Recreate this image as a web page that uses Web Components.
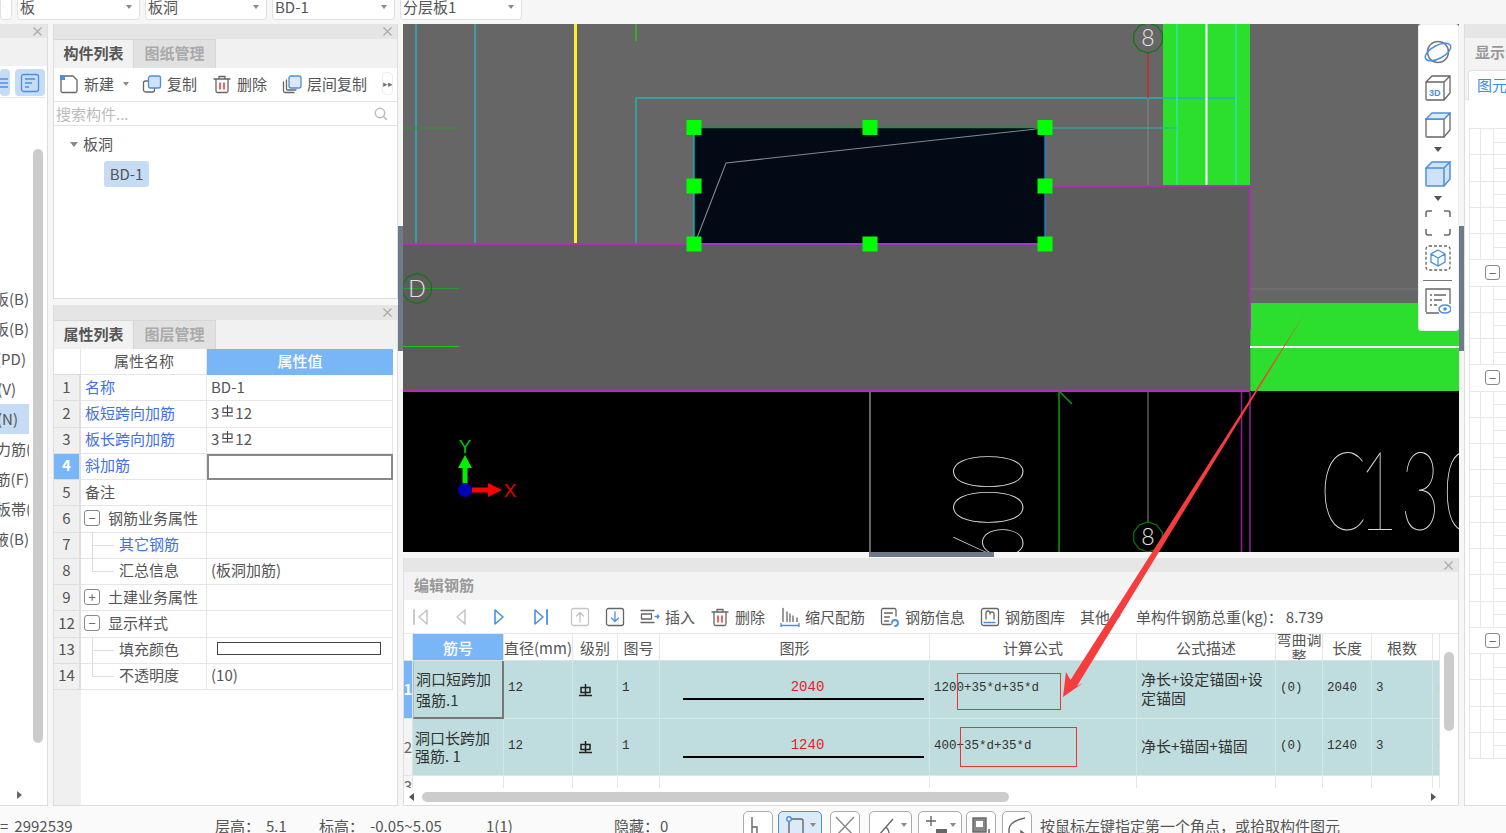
<!DOCTYPE html>
<html lang="zh">
<head>
<meta charset="utf-8">
<title>编辑钢筋</title>
<style>
    html, body { margin: 0; height: 100%; }
    body {
        width: 1506px;
        height: 833px;
        overflow: hidden;
        position: relative;
        background: #f6f6f6;
        color: #555;
        font: 15px/20px "Noto Sans CJK SC", "Noto Sans", sans-serif;
    }
    .main { display: flex; height: 782px; }
    .col2 { width: 345px; display: flex; flex-direction: column; gap: 6px; margin-left: 5px; }
    .center { width: 1056px; display: flex; flex-direction: column; }
</style>
</head>
<body>
<gx-topbar></gx-topbar>
<div class="main">
    <gx-leftnav></gx-leftnav>
    <div class="col2">
        <gx-panel tabs="构件列表,图纸管理" style="height:275px"><gx-component-list></gx-component-list></gx-panel>
        <gx-panel tabs="属性列表,图层管理" style="height:501px"><gx-prop-table></gx-prop-table></gx-panel>
    </div>
    <gx-splitter></gx-splitter>
    <div class="center">
        <gx-canvas></gx-canvas>
        <gx-rebar-panel></gx-rebar-panel>
    </div>
    <gx-splitter></gx-splitter>
    <gx-rightpanel></gx-rightpanel>
</div>
<gx-statusbar></gx-statusbar>
<gx-callout></gx-callout>

<script>
const BLUE = '#4a90e2';
const PALE = '#cfe2f9';
const GRAY = '#666';
const svg = (w, h, body) => `<svg xmlns="http://www.w3.org/2000/svg" width="${w}" height="${h}" viewBox="0 0 ${w} ${h}" fill="none" stroke-width="1.3" stroke-linejoin="round" stroke-linecap="round">${body}</svg>`;

const ICONS = {
    new: svg(20, 20, `<path d="M2 3v14a1.500 1.500 0 0 0 1.500 1.500H16.500a1.500 1.500 0 0 0 1.500-1.500V6l-4-4H6" stroke="${GRAY}"/><rect x="1" y="1" width="5" height="5" fill="${BLUE}" stroke="none"/>`),
    copy: svg(20, 20, `<rect x="1.500" y="7" width="11" height="11" rx="2" stroke="${GRAY}"/><rect x="6.500" y="2" width="12" height="12" rx="2" fill="${PALE}" stroke="${BLUE}"/>`),
    del: svg(20, 20, `<path d="M2 5h16M7 4.500V2.500h6v2M4 5v12a1.500 1.500 0 0 0 1.500 1.500h9A1.500 1.500 0 0 0 16 17V5" stroke="${GRAY}"/><path d="M8 9v6M12 9v6" stroke="#e33" stroke-width="1.500"/>`),
    floor: svg(20, 20, `<path d="M1.500 8v9a1.500 1.500 0 0 0 1.500 1.500h9" stroke="${GRAY}"/><path d="M4.500 6v9a1 1 0 0 0 1 1H14" stroke="${GRAY}"/><rect x="7" y="2" width="12" height="12" rx="2" fill="#dce9f9" stroke="${BLUE}"/>`),
    first: svg(20, 20, `<path d="M3 3v14" stroke="#c4c4c4" stroke-width="1.800"/><path d="M16 3 8 10l8 7z" stroke="#c4c4c4" stroke-width="1.500"/>`),
    prev: svg(20, 20, `<path d="M14 3 6 10l8 7z" stroke="#c4c4c4" stroke-width="1.500"/>`),
    next: svg(20, 20, `<path d="M6 3l8 7-8 7z" stroke="${BLUE}" stroke-width="1.600"/>`),
    last: svg(20, 20, `<path d="M17 3v14" stroke="${BLUE}" stroke-width="1.800"/><path d="M5 3l8 7-8 7z" stroke="${BLUE}" stroke-width="1.600"/>`),
    up: svg(20, 20, `<rect x="1.500" y="1.500" width="17" height="17" rx="2" stroke="#c4c4c4"/><path d="M10 15V6M6.500 9 10 5.500 13.500 9" stroke="#c4c4c4"/>`),
    down: svg(20, 20, `<rect x="1.500" y="1.500" width="17" height="17" rx="2" stroke="${GRAY}"/><path d="M10 5v9M6.500 11l3.500 3.500 3.500-3.500" stroke="${BLUE}"/>`),
    insert: svg(20, 20, `<path d="M1 3.500h13M1 15.500h13" stroke="${GRAY}"/><rect x="1.500" y="7" width="10" height="5" stroke="${GRAY}"/><path d="M15 9.500h4M17.500 8l1.500 1.500-1.500 1.500" stroke="${BLUE}"/>`),
    ruler: svg(20, 20, `<path d="M3 1.500v13M7 5v9.500M10 7v7.500M13 9v5.500M17 11v3.500" stroke="${GRAY}"/><path d="M1 18.500h18M1 16.500v4M19 16.500v4" stroke="${BLUE}"/>`),
    info: svg(20, 20, `<path d="M16 9V3a1.500 1.500 0 0 0-1.500-1.500H3A1.500 1.500 0 0 0 1.500 3v13A1.500 1.500 0 0 0 3 17.500h8" stroke="${GRAY}"/><path d="M4.500 6h8M4.500 10h5M4.500 14h4" stroke="${GRAY}"/><path d="M12 16a3 3 0 1 1 3 3" stroke="${BLUE}" stroke-width="1.800"/>`),
    lib: svg(20, 20, `<rect x="1.500" y="1.500" width="17" height="17" rx="2" stroke="${GRAY}"/><path d="M6 12V6a2 2 0 0 1 4 0M10 7a2 2 0 0 1 4 0v5" stroke="${GRAY}"/><path d="M4 15.500h12" stroke="${BLUE}" stroke-dasharray="3 1"/>`),
    search: svg(14, 14, `<circle cx="6" cy="6" r="4.700" stroke="#bbb" stroke-width="1.500"/><path d="M9.500 9.500 12.500 12.500" stroke="#bbb" stroke-width="1.600"/>`),
    caret: `<svg width="6" height="4" viewBox="0 0 6 4"><path d="M0 0h6L3 4z" fill="#8a8a8a"/></svg>`,
    close: `<svg width="9" height="9" viewBox="0 0 9 9" stroke="#aaa" stroke-width="1.200"><path d="M.5.500l8 8M8.500.500l-8 8"/></svg>`,
    bar: `<svg width="13" height="12" viewBox="0 0 13 12" fill="none" stroke="#444" stroke-width="1.100"><path d="M6.500 0v11M1 11h11"/><rect x="2" y="3" width="9" height="4.500"/></svg>`
};

// 钢筋级别符号
const RB = `<svg width="13" height="13" viewBox="0 0 13 13" fill="none" stroke="#222" stroke-width="1.500"><path d="M6.500 0v12M0 11.500h13"/><rect x="2" y="3.500" width="9" height="5"/></svg>`;

class GxIcon extends HTMLElement {
    constructor() {
        super();
        this.shadow = this.attachShadow({mode: 'open'});
    }

    connectedCallback() {
        this.shadow.innerHTML = `<style>:host { display: inline-flex; flex: none; } svg { display: block; }</style>${ICONS[this.getAttribute('name')]}`;
    }
}

class GxTool extends HTMLElement {
    constructor() {
        super();
        this.shadow = this.attachShadow({mode: 'open'});
    }

    connectedCallback() {
        this.shadow.innerHTML = `<style>
            :host { display: inline-flex; align-items: center; gap: 5px; flex: none; white-space: nowrap; color: #555; }
        </style><gx-icon name="${this.getAttribute('icon')}"></gx-icon><slot></slot>`;
    }
}

class GxTopbar extends HTMLElement {
    constructor() {
        super();
        this.shadow = this.attachShadow({mode: 'open'});
    }

    connectedCallback() {
        const combo = (text, w) => `<div class="combo" style="width:${w}px"><span>${text}</span>${ICONS.caret}</div>`;
        this.shadow.innerHTML = `<style>
            :host { display: flex; height: 24px; box-sizing: border-box; padding-left: 0; gap: 5px; overflow: hidden; }
            .combo {
                height: 20px; box-sizing: border-box; background: #fff; border: 1px solid #e2e2e2; border-top: 0;
                border-radius: 0 0 4px 4px; display: flex; align-items: center; justify-content: space-between;
                padding: 0 7px 6px 3px; line-height: 14px; flex: none;
            }
            .combo span { margin-left: -1px; }
        </style>
        ${combo('', 10)}${combo('板', 123)}${combo('板洞', 122)}${combo('BD-1', 123)}${combo('分层板1', 122)}`;
    }
}

class GxLeftnav extends HTMLElement {
    constructor() {
        super();
        this.shadow = this.attachShadow({mode: 'open'});
    }

    connectedCallback() {
        // 第二个数是文字末端到列宽的距离，这一栏被窗口裁掉了一半
        const items = [['板(B)', 0], ['板(B)', 0], ['(PD)', 3], ['(V)', 13], ['(N)', 11], ['力筋(', -2], ['筋(F)', 0], ['板帯(', -2], ['腋(B)', 0]];
        this.shadow.innerHTML = `<style>
            :host { display: flex; flex-direction: column; width: 48px; height: 782px; box-sizing: border-box; background: #fff; border-right: 1px solid #ddd; border-bottom: 1px solid #ddd; overflow: hidden; }
            .strip { height: 14px; background: #e6e6e6; display: flex; justify-content: flex-end; align-items: center; padding-right: 5px; flex: none; }
            .tabs { height: 28px; background: #f1f1f1; flex: none; }
            .tools { height: 32px; display: flex; gap: 5px; padding-top: 3px; border-bottom: 1px solid #e6e6e6; margin-right: 1px; flex: none; box-sizing: border-box; }
            .tools div { height: 27px; background: #c5dcf4; border-radius: 4px; display: flex; align-items: center; justify-content: center; }
            .body { flex: 1; display: flex; position: relative; }
            ul { list-style: none; margin: 0; padding: 0; width: 29px; margin-top: 186px; }
            li { height: 30px; display: flex; align-items: center; justify-content: flex-end; white-space: nowrap; overflow: hidden; }
            li.on { background: #c5dcf4; }
            li span { flex: none; }
            .thumb { position: absolute; left: 33px; top: 51px; width: 10px; height: 594px; background: #ccc; border-radius: 5px; }
            .arrow { position: absolute; left: 17px; top: 693px; width: 0; height: 0; border: 4px solid transparent; border-left: 5px solid #666; border-right: 0; }
        </style>
        <div class="strip">${ICONS.close}</div>
        <div class="tabs"></div>
        <div class="tools">
            <div style="width:10px"><svg width="10" height="14" stroke="${BLUE}" stroke-width="1.300"><path d="M0 3h8M0 7h8M0 11h8"/></svg></div>
            <div style="width:30px;margin-left:0"><svg width="20" height="20" viewBox="0 0 20 20" fill="none" stroke="${BLUE}" stroke-width="1.300"><rect x="1.500" y="1.500" width="17" height="17" rx="2"/><path d="M5 6h10M5 10h7M5 14h4"/></svg></div>
        </div>
        <div class="body">
            <ul>${items.map(([t, r], i) => `<li class="${i === 4 ? 'on' : ''}"><span style="margin-right:${r}px">${t}</span></li>`).join('')}</ul>
            <div class="thumb"></div>
            <div class="arrow"></div>
        </div>`;
    }
}

class GxPanel extends HTMLElement {
    constructor() {
        super();
        this.shadow = this.attachShadow({mode: 'open'});
    }

    connectedCallback() {
        const tabs = this.getAttribute('tabs').split(',');
        this.shadow.innerHTML = `<style>
            :host { display: flex; flex-direction: column; box-sizing: border-box; border: 1px solid #ddd; border-top: 0; background: #fff; flex: none; }
            .strip { height: 15px; background: #e5e5e5; display: flex; justify-content: flex-end; align-items: center; padding-right: 5px; flex: none; }
            .tabs { height: 29px; display: flex; background: #f1f1f1; flex: none; }
            .tab { width: 80px; text-align: center; line-height: 25px; font-weight: 700; box-sizing: border-box; border: 1px solid #d6d6d6; border-bottom: 0; border-left-width: 0; }
            .tab.on { background: #f1f1f1; color: #555; }
            .tab.off { background: #e1e1e1; color: #aaa; width: 82px; }
            .content { flex: 1; min-height: 0; display: flex; flex-direction: column; }
        </style>
        <div class="strip">${ICONS.close}</div>
        <div class="tabs">${tabs.map((t, i) => `<div class="tab ${i ? 'off' : 'on'}">${t}</div>`).join('')}</div>
        <div class="content"><slot></slot></div>`;
    }
}

class GxComponentList extends HTMLElement {
    constructor() {
        super();
        this.shadow = this.attachShadow({mode: 'open'});
    }

    connectedCallback() {
        this.shadow.innerHTML = `<style>
            :host { display: flex; flex-direction: column; height: 100%; }
            .tools { height: 34px; flex: none; box-sizing: border-box; border-bottom: 1px solid #e4e4e4; display: flex; align-items: center; padding-bottom: 2px; }
            .more { margin-left: 15px; width: 11px; height: 23px; border: 1px solid #eee; border-radius: 4px; font-size: 9px; line-height: 21px; text-align: center; color: #777; box-sizing: border-box; white-space: nowrap; overflow: hidden; }
            .search { height: 24px; flex: none; box-sizing: border-box; border-bottom: 1px solid #e4e4e4; display: flex; align-items: center; justify-content: space-between; padding: 0 9px 0 2px; color: #bbb; }
            .tree { padding: 8px 0 0 16px; }
            .node { display: flex; align-items: center; gap: 5px; height: 20px; }
            .tri { width: 0; height: 0; border: 4px solid transparent; border-top: 5px solid #888; border-bottom: 0; }
            .chip { margin: 7px 0 0 34px; width: 45px; height: 26px; line-height: 25px; text-align: center; background: #c5dcf4; border-radius: 3px; }
        </style>
        <div class="tools">
            <gx-tool icon="new" style="margin-left:5px">新建</gx-tool>
            <span style="margin-left:9px;display:flex">${ICONS.caret}</span>
            <gx-tool icon="copy" style="margin-left:13px">复制</gx-tool>
            <gx-tool icon="del" style="margin-left:15px">删除</gx-tool>
            <gx-tool icon="floor" style="margin-left:15px">层间复制</gx-tool>
            <div class="more">▸▸</div>
        </div>
        <div class="search"><span>搜索构件...</span><gx-icon name="search"></gx-icon></div>
        <div class="tree">
            <div class="node"><span class="tri"></span><span>板洞</span></div>
            <div class="chip">BD-1</div>
        </div>`;
    }
}

class GxPropTable extends HTMLElement {
    constructor() {
        super();
        this.shadow = this.attachShadow({mode: 'open'});
    }

    connectedCallback() {
        const rebar = `<span class="rb">3${ICONS.bar}12</span>`;
        const rows = [
            ['1', '名称', 'BD-1', 'link'],
            ['2', '板短跨向加筋', rebar, 'link'],
            ['3', '板长跨向加筋', rebar, 'link'],
            ['4', '斜加筋', '', 'link active'],
            ['5', '备注', '', ''],
            ['6', '钢筋业务属性', '', 'minus'],
            ['7', '其它钢筋', '', 'child link'],
            ['8', '汇总信息', '(板洞加筋)', 'child end'],
            ['9', '土建业务属性', '', 'plus'],
            ['12', '显示样式', '', 'minus'],
            ['13', '填充颜色', '<i class="swatch"></i>', 'child'],
            ['14', '不透明度', '(10)', 'child end']
        ];
        const rowHtml = rows.map(([n, name, val, kind]) => {
            const toggle = kind.includes('minus') ? '<b class="tg">−</b>' : kind.includes('plus') ? '<b class="tg">+</b>' : '';
            return `<div class="row ${kind}"><div class="idx">${n}</div><div class="name">${toggle}<span>${name}</span></div><div class="val">${val}</div></div>`;
        }).join('');
        this.shadow.innerHTML = `<style>
            :host { display: block; flex: 1; height: 100%; background: linear-gradient(#f0f0f0, #f0f0f0) 0 0 / 27px 100% no-repeat; }
            .row { display: grid; grid-template-columns: 27px 126px 186px; height: 26.25px; }
            .row > div { box-sizing: border-box; border-bottom: 1px solid #e6e6e6; border-right: 1px solid #e6e6e6; display: flex; align-items: center; white-space: nowrap; overflow: hidden; background-color: #fff; padding-bottom: 2px; }
            .row > .idx { background: #f0f0f0; justify-content: center; border-right: 2px solid #dedede; border-bottom-color: #dedede; }
            .head { height: 26px; }
            .head > .idx { background: #fff; border-right: 1px solid #e6e6e6; }
            .head > .name { justify-content: center; padding-left: 1px; }
            .head > .val { background: #78b6f7; color: #fff; justify-content: center; font-weight: 500; border: 0; padding-left: 0; }
            .name { padding-left: 4px; }
            .val { padding-left: 4px; }
            .link .name { color: #3f70e6; }
            .active > .idx { background: #78b6f7; color: #fff; font-weight: 700; }
            .active > .val { border: 2px solid #888; }
            .tg { width: 14px; height: 14px; border: 1px solid #888; border-radius: 3px; font-weight: 400; font-size: 13px; line-height: 13px; text-align: center; margin-right: 8px; flex: none; color: #666; }
            .minus .name, .plus .name { padding-left: 3px; }
            .child .name { padding-left: 38px; background-image: linear-gradient(#ddd, #ddd), linear-gradient(#ddd, #ddd); background-repeat: no-repeat; background-position: 11px 0, 11px 50%; background-size: 1px 100%, 22px 1px; }
            .child.end .name { background-size: 1px 50%, 22px 1px; }
            .rb { display: inline-flex; align-items: center; }
            .rb svg { margin: 0 1px 4px 2px; }
            .swatch { display: block; margin-left: 6px; width: 164px; height: 13px; box-sizing: border-box; border: 1px solid #444; background: #fff; margin-bottom: 2px; }
        </style>
        <div class="row head"><div class="idx"></div><div class="name">属性名称</div><div class="val">属性值</div></div>
        ${rowHtml}`;
    }
}

class GxSplitter extends HTMLElement {
    constructor() {
        super();
        this.shadow = this.attachShadow({mode: 'open'});
    }

    connectedCallback() {
        this.shadow.innerHTML = `<style>
            :host { display: block; width: 5px; flex: none; padding-top: 202px; box-sizing: border-box; }
            div { height: 125px; background: #6e7a87; }
        </style><div></div>`;
    }
}

class GxCanvas extends HTMLElement {
    constructor() {
        super();
        this.shadow = this.attachShadow({mode: 'open'});
    }

    connectedCallback() {
        const handles = [[694, 127.5], [870, 127.5], [1045, 127.5], [694, 186], [1045, 186], [694, 244], [870, 244], [1045, 244]]
            .map(([x, y]) => `<rect x="${x - 7.5}" y="${y - 7.5}" width="15" height="15" fill="#00ff00"/>`).join('');
        const bubble = (cx, cy, t) => {
            const pts = [];
            for (let i = 0; i < 10; i++) {
                const a = Math.PI * 2 * i / 10 + Math.PI / 10;
                pts.push(`${(cx + 15 * Math.cos(a)).toFixed(1)},${(cy + 15 * Math.sin(a)).toFixed(1)}`);
            }
            return `<polygon points="${pts.join(' ')}" fill="none" stroke="#0b7a0b" stroke-width="1.200"/><text class="thin" x="${cx}" y="${cy + 8}" text-anchor="middle" font-size="23">${t}</text>`;
        };
        this.shadow.innerHTML = `<style>
            :host { display: block; position: relative; height: 528px; flex: none; overflow: hidden; background: #000; }
            svg.cad { display: block; }
            .thin { fill: #e2e2e2; font-family: Lato, "Liberation Sans", sans-serif; font-weight: 300; }
            .cadt { fill: #dcdcdc; font-family: Lato, "Liberation Sans", sans-serif; font-weight: 100; }
            .rail { position: absolute; left: 1015px; top: 0; width: 41px; height: 307px; background: #fff; border-radius: 3px; box-sizing: border-box; display: flex; flex-direction: column; align-items: center; border: 1px solid #eee; padding-right: 2px; }
            .rail svg { display: block; flex: none; }
            .rail .c { width: 0; height: 0; border: 4px solid transparent; border-top: 5px solid #555; border-bottom: 0; flex: none; }
        </style>
        <svg class="cad" width="1056" height="528" viewBox="403 24 1056 528" fill="none">
            <rect x="403" y="24" width="1056" height="367" fill="#666"/>
            <rect x="1163" y="24" width="87" height="162" fill="#2ddf2d"/>
            <path d="M1045 186H1250V391H403V244H1045Z" fill="#5c5c5c"/>
            <path d="M1250.500 303H1459V391H1250.500Z" fill="#2ddf2d"/>

            <path d="M416 24V244M475 24V244" stroke="#1fc4d0" stroke-width="1.200"/>
            <path d="M575.500 24V244" stroke="#ffef2a" stroke-width="3"/>
            <path d="M636 24V41" stroke="#2fbf1f" stroke-width="1.500"/>
            <path d="M636 244V98H1236" stroke="#24b4ba" stroke-width="1.300"/>
            <path d="M403 128H459M403 288.500H459" stroke="#2a9a2a" stroke-width="1.200"/>
            <path d="M403 346.500H459" stroke="#11cc11" stroke-width="1.200"/>

            <path d="M1177 24V186M1236 24V186" stroke="#27e8c0" stroke-width="1.300"/>
            <path d="M1206.500 24V186" stroke="#fff" stroke-width="2"/>
            <path d="M1045 128H1177" stroke="#29b0b0" stroke-width="1.200"/>
            <path d="M1148 52V98" stroke="#d32222" stroke-width="1.300"/>
            <path d="M1148 98V186" stroke="#888"/>
            <path d="M1250 289H1420" stroke="#777"/>

            <rect x="694" y="127.500" width="351" height="116.500" fill="#020a15"/>
            <path d="M694 127.500H1045" stroke="#0f9a3a" stroke-width="1.300"/>
            <path d="M694 127V244" stroke="#13bcc0" stroke-width="1.300"/>
            <path d="M1045 127V244" stroke="#1d82e0" stroke-width="1.300"/>
            <path d="M697 238L726 163L1045 128" stroke="#7f8a90" stroke-width="1.100"/>

            <path d="M403 244H694" stroke="#b02fb5" stroke-width="1.800"/>
            <path d="M694 244H1045" stroke="#9f34d8" stroke-width="1.800"/>
            <path d="M1045 186H1250V330" stroke="#b02fb5" stroke-width="1.800"/>
            <path d="M403 391H1250" stroke="#b02fb5" stroke-width="1.800"/>
            <path d="M1250 347H1459" stroke="#fff" stroke-width="2"/>
            ${handles}
            ${bubble(417, 288.500, 'D')}
            ${bubble(1148, 38, '8')}

            <path d="M870 392V552" stroke="#aaa" stroke-width="1.200"/>
            <path d="M1059 392V552M1059 391L1072 404" stroke="#0a9a0a" stroke-width="1.500"/>
            <path d="M1148 392V523" stroke="#888"/>
            <path d="M1241.500 392V552M1250 392V552" stroke="#8e1a96" stroke-width="1.600"/>
            ${bubble(1148, 537, '8')}

            <text class="cadt" transform="translate(1023,561) rotate(-90) scale(.63,1)" font-size="98">600</text>
            <text class="cadt" transform="translate(1320,530) scale(.62,1)" font-size="110" x="0 62 130 200">C130</text>

            <path d="M465 484V466" stroke="#00f000" stroke-width="5"/>
            <path d="M465 455L472 468H458Z" fill="#00f000"/>
            <path d="M472 490H489" stroke="#f00" stroke-width="5"/>
            <path d="M488 483L502 490L488 497Z" fill="#f00"/>
            <circle cx="465" cy="490" r="7" fill="#0000b4"/>
            <text x="465" y="453" text-anchor="middle" font-size="19" fill="#00c000" font-family="Liberation Sans">Y</text>
            <text x="510" y="497" text-anchor="middle" font-size="19" fill="#e00000" font-family="Liberation Sans">X</text>
        </svg>
        <div class="rail">
            <svg style="margin-top:14px" width="28" height="26" viewBox="0 0 28 26"><circle cx="14" cy="13" r="10.500" fill="none" stroke="#777" stroke-width="1.500"/><ellipse cx="14" cy="13" rx="14" ry="6.500" transform="rotate(-28 14 13)" fill="none" stroke="${BLUE}" stroke-width="1.500"/></svg>
            <svg style="margin-top:10px" width="26" height="26" viewBox="0 0 26 26" fill="none" stroke="#666" stroke-width="1.300"><path d="M1 7h18v18H2a1 1 0 0 1-1-1zM1 7l6-6h18v17l-6 7M19 7l6-6"/><text x="4" y="21" font-size="9" font-weight="700" fill="${BLUE}" stroke="none" font-family="Liberation Sans">3D</text></svg>
            <svg style="margin-top:11px" width="26" height="26" viewBox="0 0 26 26" fill="none" stroke="#666" stroke-width="1.300"><path d="M1 7h18v18H2a1 1 0 0 1-1-1z"/><path d="M19 25l6-7V1M19 7l6-6" /><path d="M1 7l6-6h18l-6 6z" fill="#dce9f9" stroke="${BLUE}"/></svg>
            <span class="c" style="margin-top:9px"></span>
            <svg style="margin-top:9px" width="26" height="26" viewBox="0 0 26 26" fill="${PALE}" stroke="${BLUE}" stroke-width="1.500"><path d="M1 7h18v18H2a1 1 0 0 1-1-1zM1 7l6-6h18l-6 6zM19 7l6-6v17l-6 7z"/></svg>
            <span class="c" style="margin-top:9px"></span>
            <svg style="margin-top:9px" width="26" height="26" viewBox="0 0 26 26" fill="none" stroke="#666" stroke-width="1.500"><path d="M1 7V3a2 2 0 0 1 2-2h4M19 1h4a2 2 0 0 1 2 2v4M25 19v4a2 2 0 0 1-2 2h-4M7 25H3a2 2 0 0 1-2-2v-4"/></svg>
            <svg style="margin-top:9px" width="26" height="26" viewBox="0 0 26 26" fill="none" stroke-width="1.300"><rect x="1" y="1" width="24" height="24" rx="3" stroke="#666" stroke-dasharray="3 2"/><path d="M13 5l7 4v8l-7 4-7-4V9zM6 9l7 4 7-4M13 13v8" stroke="${BLUE}"/></svg>
            <div style="width:29px;height:1px;background:#777;margin-top:9px;flex:none"></div>
            <svg style="margin-top:7px" width="26" height="26" viewBox="0 0 26 26" fill="none" stroke="#666" stroke-width="1.300"><path d="M1 24V1h24v15M1 25h13"/><path d="M5 7h2M9 7h12M5 12h2M9 12h8M5 17h2M9 17h3"/><ellipse cx="20" cy="21" rx="6" ry="4" stroke="${BLUE}" stroke-width="1.500" fill="#fff"/><circle cx="20" cy="21" r="1.800" fill="${BLUE}" stroke="none"/></svg>
        </div>`;
    }
}

class GxRebarPanel extends HTMLElement {
    constructor() {
        super();
        this.shadow = this.attachShadow({mode: 'open'});
    }

    connectedCallback() {
        const heads = ['', '筋号', '直径(mm)', '级别', '图号', '图形', '计算公式', '公式描述', '弯曲调整', '长度', '根数', ''];
        const cell = (html, cls = '', st = '') => `<div class="td ${cls}" style="${st}">${html}</div>`;
        const row = (n, name, lh, shape, formula, desc, len, sel) => `<div class="tr data ${sel ? 'sel' : ''}">
            ${cell(n, 'no')}
            ${cell(name, 'nm', `line-height:${lh}px`)}
            ${cell('12', 'm')}
            ${cell(RB, 'cn')}
            ${cell('1', 'm')}
            <div class="td shape"><span>${shape}</span><i></i></div>
            ${cell(formula, 'm f')}
            ${cell(desc, 'desc')}
            ${cell('(0)', 'm')}
            ${cell(len, 'm')}
            ${cell('3', 'm')}
            ${cell('(0)', 'm')}
        </div>`;
        this.shadow.innerHTML = `<style>
            :host { display: flex; flex-direction: column; height: 254px; box-sizing: border-box; margin-top: 0; border-left: 1px solid #ddd; border-right: 1px solid #ddd; border-bottom: 1px solid #ddd; background: #fff; position: relative; flex: none; }
            .gap { height: 6px; background: #f6f6f6; flex: none; margin: 0 -1px; padding-left: 466px; }
            .gap b { display: block; width: 125px; height: 5px; background: #6e7a87; }
            .strip { height: 14px; background: #e6e6e6; display: flex; justify-content: flex-end; align-items: center; padding-right: 5px; flex: none; }
            .heading { height: 28px; background: #f3f3f3; line-height: 25px; padding-left: 10px; color: #999; font-weight: 700; flex: none; }
            .tools { height: 34px; flex: none; box-sizing: border-box; border-bottom: 1px solid #e8e8e8; display: flex; align-items: center; white-space: nowrap; }
            .wrap { display: flex; flex: 1; min-height: 0; }
            .table { width: 1036px; flex: none; height: 154px; overflow: hidden; }
            .tr { display: grid; grid-template-columns: 9px 91px 69px 45px 42px 270px 207px 139px 47px 49px 61px 7px; }
            .th { height: 27px; box-sizing: border-box; display: flex; align-items: center; justify-content: center; text-align: center; border-right: 1px solid #e6e6e6; border-bottom: 1px solid #e0e0e0; white-space: nowrap; overflow: hidden; padding-top: 1px; }
            .th.on { background: #78b6f7; color: #fff; font-weight: 500; }
            .th.wrapn { white-space: normal; line-height: 17px; padding-top: 0; }
            .data { height: 57.500px; background: #bfddde; color: #333; }
            .td { box-sizing: border-box; border-right: 1px solid #d3e5e5; border-bottom: 1px solid #d9e8e8; display: flex; align-items: center; overflow: hidden; padding-left: 4px; white-space: nowrap; }
            .td.no { padding: 0; justify-content: center; color: #666; background: #f4f4f4; }
            .sel .td.no { background: #78b6f7; color: #fff; font-weight: 700; }
            .td.nm { white-space: normal; padding: 0 0 0 2px; word-break: break-all; }
            .sel .td.nm { border: 2px solid #777; border-top: 0; border-left: 1px solid #bbb; }
            .td.m { font: 12.500px/20px "Liberation Mono", monospace; padding-bottom: 2px; }
            .td.cn { padding-left: 6px; padding-top: 2px; }
            .td.desc { white-space: normal; line-height: 19px; padding: 0 8px 2px 4px; }
            .td.shape { display: block; padding: 0; position: relative; text-align: center; }
            .td.shape span { display: block; font: 14px/20px "Liberation Mono", monospace; color: #e6202a; margin-top: 16px; transform: translateX(13px); }
            .td.shape i { display: block; margin: 1px 0 0 23px; width: 241px; height: 2px; background: #000; }
            .blank { height: 14px; }
            .blank .td { border-bottom: 0; background: #fff; border-right-color: #e6e6e6; }
            .blank .no { align-items: flex-start; background: #f4f4f4; }
            .v { flex: 1; position: relative; }
            .v b { display: block; margin: 18px 0 0 4px; width: 10px; height: 79px; background: #ccc; border-radius: 5px; }
            .h { height: 17px; flex: none; display: flex; align-items: center; margin-top: -1px; }
            .tl, .tr2 { width: 0; height: 0; border: 4px solid transparent; flex: none; }
            .tl { border-right: 5px solid #555; border-left: 0; margin-left: 5px; }
            .tr2 { border-left: 5px solid #555; border-right: 0; margin-left: 422px; }
            .h b { display: block; margin-left: 8px; width: 587px; height: 10px; background: #ccc; border-radius: 5px; }
        </style>
        <div class="gap"><b></b></div>
        <div class="strip">${ICONS.close}</div>
        <div class="heading">编辑钢筋</div>
        <div class="tools">
            <gx-icon name="first" style="margin-left:7px"></gx-icon>
            <gx-icon name="prev" style="margin-left:20px"></gx-icon>
            <gx-icon name="next" style="margin-left:18px"></gx-icon>
            <gx-icon name="last" style="margin-left:21px"></gx-icon>
            <gx-icon name="up" style="margin-left:20px"></gx-icon>
            <gx-icon name="down" style="margin-left:15px"></gx-icon>
            <gx-tool icon="insert" style="margin-left:15px">插入</gx-tool>
            <gx-tool icon="del" style="margin-left:15px">删除</gx-tool>
            <gx-tool icon="ruler" style="margin-left:15px">缩尺配筋</gx-tool>
            <gx-tool icon="info" style="margin-left:15px">钢筋信息</gx-tool>
            <gx-tool icon="lib" style="margin-left:15px">钢筋图库</gx-tool>
            <span style="margin-left:15px">其他</span>
            <span style="margin-left:5px;display:flex">${ICONS.caret}</span>
            <span style="margin-left:15px">单构件钢筋总重(kg)：<span style="margin-left:3px">8.739</span></span>
        </div>
        <div class="wrap">
            <div class="table">
                <div class="tr">${heads.map((h, i) => `<div class="th ${i === 1 ? 'on' : ''} ${i === 8 ? 'wrapn' : ''}">${h}</div>`).join('')}</div>
                ${row('1', '洞口短跨加强筋.1', 21, '2040', '1200+35*d+35*d', '净长+设定锚固+设定锚固', '2040', true)}
                ${row('2', '洞口长跨加强筋. 1', 18, '1240', '400+35*d+35*d', '净长+锚固+锚固', '1240', false)}
                <div class="tr blank">${heads.map((h, i) => `<div class="td ${i === 0 ? 'no' : ''}">${i === 0 ? '3' : ''}</div>`).join('')}</div>
            </div>
            <div class="v"><b></b></div>
        </div>
        <div class="h"><span class="tl"></span><b></b><span class="tr2"></span></div>`;
    }
}

class GxRightpanel extends HTMLElement {
    constructor() {
        super();
        this.shadow = this.attachShadow({mode: 'open'});
    }

    connectedCallback() {
        const layout = [5, 'g', 3, 'g', 9, 'g', 4];
        let rows = '';
        layout.forEach(k => {
            if (k === 'g') {
                rows += '<div class="row g"><b>−</b></div>';
            } else {
                rows += '<div class="row i"><i></i><i></i><i class="s"></i></div>'.repeat(k);
            }
        });
        this.shadow.innerHTML = `<style>
            :host { display: flex; flex-direction: column; width: 42px; height: 782px; box-sizing: border-box; background: #fff; border-left: 1px solid #ddd; border-bottom: 1px solid #ddd; overflow: hidden; flex: none; }
            .strip { height: 14px; background: #e6e6e6; flex: none; }
            .heading { height: 27px; background: #f3f3f3; line-height: 27px; padding-left: 10px; color: #999; font-weight: 700; flex: none; white-space: nowrap; }
            .tabs { height: 35px; background: #f3f3f3; flex: none; padding: 5px 0 0 3px; box-sizing: border-box; border-bottom: 1px solid #e8e8e8; }
            .tab { height: 30px; background: #fff; border: 1px solid #e0e0e0; border-bottom: 0; border-right: 0; border-radius: 4px 0 0 0; color: #3b8ce8; padding-left: 8px; line-height: 28px; white-space: nowrap; }
            .top { height: 28px; flex: none; }
            .grid { margin-left: 4px; border-left: 1px solid #e6e6e6; border-bottom: 1px solid #e6e6e6; }
            .row { height: 26.250px; box-sizing: border-box; border-top: 1px solid #e8e8e8; display: flex; }
            .row i { display: block; flex: none; border-right: 1px solid #e8e8e8; width: 10px; }
            .row i:nth-child(2) { width: 12px; }
            .row i.s { flex: 1; border-right: 0; background: linear-gradient(#e8e8e8, #e8e8e8) 0 12.500px / 100% 1px no-repeat; }
            .g b { display: block; width: 15px; height: 15px; margin: 5px 0 0 15px; box-sizing: border-box; border: 1px solid #888; border-radius: 3px; font-weight: 400; font-size: 13px; line-height: 13px; text-align: center; color: #666; }
        </style>
        <div class="strip"></div>
        <div class="heading">显示</div>
        <div class="tabs"><div class="tab">图元</div></div>
        <div class="top"></div>
        <div class="grid">${rows}</div>`;
    }
}

class GxStatusbar extends HTMLElement {
    constructor() {
        super();
        this.shadow = this.attachShadow({mode: 'open'});
    }

    connectedCallback() {
        const s = 'fill="none" stroke="#666" stroke-width="1.400"';
        const btn = (w, ml, body, cls = '', caret = false) => `<div class="btn ${cls}" style="width:${w}px;margin-left:${ml}px"><svg width="24" height="22" viewBox="0 0 24 22" ${s}>${body}</svg>${caret ? ICONS.caret : ''}</div>`;
        const val = (ml, t) => `<i style="font-style:normal;margin-left:${ml}px">${t}</i>`;
        this.shadow.innerHTML = `<style>
            :host { display: flex; height: 27px; background: #fafafa; overflow: hidden; white-space: nowrap; align-items: flex-start; }
            span { flex: none; padding-top: 10px; line-height: 20px; }
            .btn { flex: none; height: 30px; margin-top: 5px; box-sizing: border-box; border: 1px solid #aaa; border-radius: 5px 5px 0 0; background: #fff; display: flex; align-items: flex-start; justify-content: center; gap: 2px; padding-top: 3px; }
            .btn svg + svg { margin-top: 8px; }
            .btn.on { background: #dce9f9; border-color: ${BLUE}; }
        </style>
        <span style="width:215px">=${val(6, '2992539')}</span>
        <span style="width:104px">层高：${val(6, '5.1')}</span>
        <span style="width:167px">标高：${val(6, '-0.05~5.05')}</span>
        <span style="width:128px">1(1)</span>
        <span style="width:129px">隐藏：${val(1, '0')}</span>
        ${btn(30, 0, '<path d="M6 2v19h14M6 12h5v9"/>')}
        ${btn(44, 5, `<rect x="5" y="4" width="14" height="18" rx="2"/><circle cx="5" cy="4" r="2.200" stroke="${BLUE}" fill="#fff"/>`, 'on', true)}
        ${btn(30, 8, '<path d="M3 2l18 19M21 2 3 21" stroke="#888"/>')}
        ${btn(43, 9, '<path d="M4 20H22M4 20 18 4M11 12a9 9 0 0 1 3 8"/>', '', true)}
        ${btn(44, 6, `<path d="M7 1v10M2 6h10"/><rect x="12" y="14" width="11" height="6" fill="#666" stroke="none"/>`, '', true)}
        ${btn(30, 4, `<rect x="4" y="3" width="13" height="14" fill="#888"/><rect x="7" y="6" width="7" height="6" fill="#fff" stroke="none"/><path d="M10 20h10v-6" stroke="#555"/>`)}
        ${btn(30, 6, `<path d="M4 22V14Q5 6 20 3"/><path d="M16 16l5 4-5 2z" fill="#666"/>`)}
        <span style="margin-left:8px">按鼠标左键指定第一个角点，或拾取构件图元</span>`;
    }
}

// 截图上的红色标注，盖在表格和画布上面
class GxCallout extends HTMLElement {
    constructor() {
        super();
        this.shadow = this.attachShadow({mode: 'open'});
    }

    connectedCallback() {
        this.shadow.innerHTML = `<style>
            :host { position: absolute; left: 0; top: 0; width: 1506px; height: 833px; pointer-events: none; display: block; }
            svg { display: block; }
        </style>
        <svg width="1506" height="833" viewBox="0 0 1506 833" fill="none">
            <rect x="957.500" y="673.500" width="103" height="36" stroke="#ee3333"/>
            <rect x="960.500" y="727.500" width="116" height="39" stroke="#ee3333"/>
            <path d="M1305 313L1077 686L1083 683L1063 697L1066 672L1070.500 680Z" fill="#f63c3c"/>
        </svg>`;
    }
}

customElements.define('gx-icon', GxIcon);
customElements.define('gx-tool', GxTool);
customElements.define('gx-topbar', GxTopbar);
customElements.define('gx-leftnav', GxLeftnav);
customElements.define('gx-panel', GxPanel);
customElements.define('gx-component-list', GxComponentList);
customElements.define('gx-prop-table', GxPropTable);
customElements.define('gx-splitter', GxSplitter);
customElements.define('gx-canvas', GxCanvas);
customElements.define('gx-rebar-panel', GxRebarPanel);
customElements.define('gx-rightpanel', GxRightpanel);
customElements.define('gx-statusbar', GxStatusbar);
customElements.define('gx-callout', GxCallout);
</script>
</body>
</html>
